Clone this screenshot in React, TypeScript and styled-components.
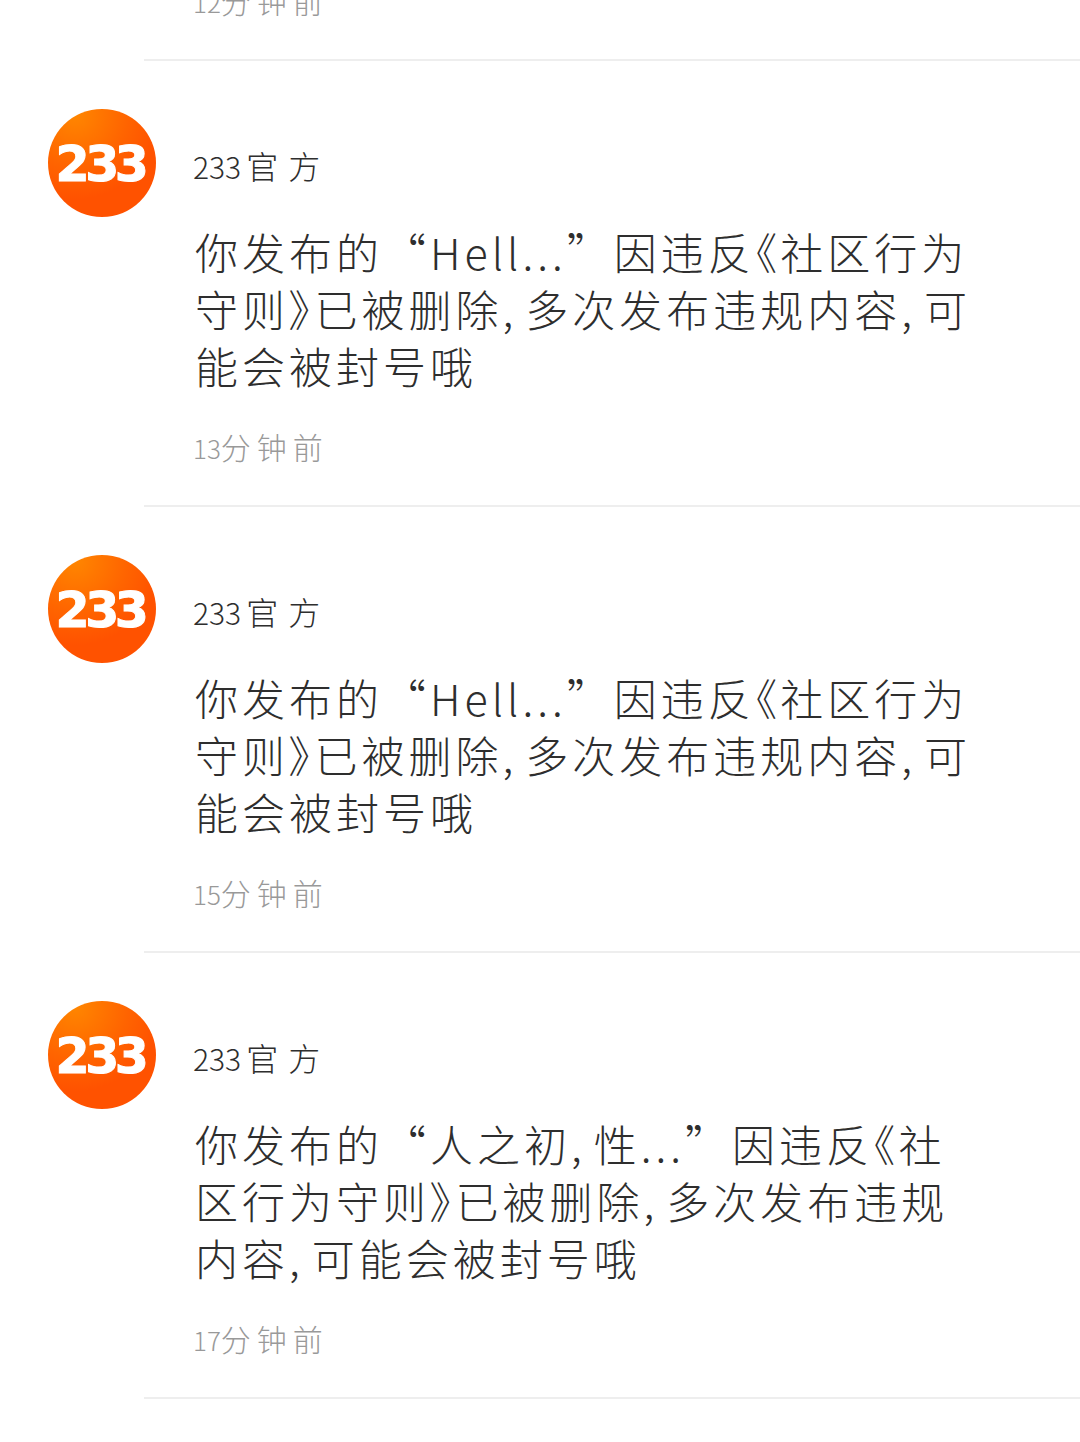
import * as React from "react";
import styled, { createGlobalStyle } from "styled-components";

const GlobalStyle = createGlobalStyle`
  html, body {
    margin: 0;
    padding: 0;
    background: #fff;
  }
  body {
    font-family: "Noto Sans CJK SC", "Noto Sans", sans-serif;
  }
`;

const Page = styled.div`
  width: 1080px;
  height: 1442px;
  overflow: hidden;
  background: #fff;
`;

const Divider = styled.div`
  height: 2px;
  margin-left: 144px;
  background: #eeeeee;
`;

const Row = styled.div`
  display: flex;
  align-items: flex-start;
  height: 444px;
  padding: 48px 0 0 48px;
  box-sizing: border-box;
`;

const Avatar = styled.div`
  flex: none;
  width: 108px;
  height: 108px;
  border-radius: 50%;
  display: flex;
  align-items: center;
  justify-content: center;
  background: radial-gradient(circle at 25% 5%, #ff8600 0%, #ff6400 40%, #ff5200 65%);
`;

const AvatarText = styled.span`
  font-family: "DejaVu Sans", sans-serif;
  font-weight: 700;
  font-size: 49px;
  line-height: 1;
  color: #fff;
  -webkit-text-stroke: 1px #fff;
  letter-spacing: -4.5px;
  margin-left: -4px;
  padding-top: 2px;
`;

const Content = styled.div`
  margin-left: 37px;
  width: 782px;
  padding-top: 36px;
`;

const Name = styled.div`
  font-size: 32px;
  line-height: 40px;
  letter-spacing: 10px;
  font-weight: 300;
  color: #2e2e2e;
`;

const NameDigits = styled.span`
  font-size: 30px;
  letter-spacing: 0;
  margin-right: 5px;
`;

const Message = styled.div`
  margin-top: 37px;
  padding-left: 2px;
  font-size: 43px;
  line-height: 57px;
  letter-spacing: 4px;
  font-weight: 300;
  color: #2e2e2e;
`;

// book title marks are half width in the reference
const Bracket = styled.span`
  font-feature-settings: "palt";
`;

const Comma = styled.span`
  letter-spacing: 12px;
`;

const Time = styled.div`
  margin-top: 34px;
  font-size: 30px;
  line-height: 36px;
  letter-spacing: 6px;
  font-weight: 300;
  color: #999999;
`;

const TimeDigits = styled.span`
  font-size: 26px;
  letter-spacing: 0;
`;

// the list is scrolled, only the tail of the previous item is left at the top
const ScrolledTime = styled(Time)`
  height: 77px;
  margin-top: -18px;
  padding-left: 193px;
`;

const notices = [
  { excerpt: "Hell...", minutes: 13 },
  { excerpt: "Hell...", minutes: 15 },
  { excerpt: "人之初,性...", minutes: 17 },
];

const renderMessage = (text: string) =>
  text.split(/([《》,])/).map((part, i) => {
    if (part === "《" || part === "》") return <Bracket key={i}>{part}</Bracket>;
    if (part === ",") return <Comma key={i}>{part}</Comma>;
    return part;
  });

const App: React.FC = () => {
  return (
    <Page>
      <GlobalStyle />
      <ScrolledTime>
        <TimeDigits>12</TimeDigits>分钟前
      </ScrolledTime>
      <Divider />
      {notices.map((notice, i) => (
        <React.Fragment key={i}>
          <Row>
            <Avatar>
              <AvatarText>233</AvatarText>
            </Avatar>
            <Content>
              <Name>
                <NameDigits>233</NameDigits>官方
              </Name>
              <Message>
                {renderMessage(
                  `你发布的“${notice.excerpt}”因违反《社区行为守则》已被删除,多次发布违规内容,可能会被封号哦`
                )}
              </Message>
              <Time>
                <TimeDigits>{notice.minutes}</TimeDigits>分钟前
              </Time>
            </Content>
          </Row>
          <Divider />
        </React.Fragment>
      ))}
    </Page>
  );
};

export default App;
